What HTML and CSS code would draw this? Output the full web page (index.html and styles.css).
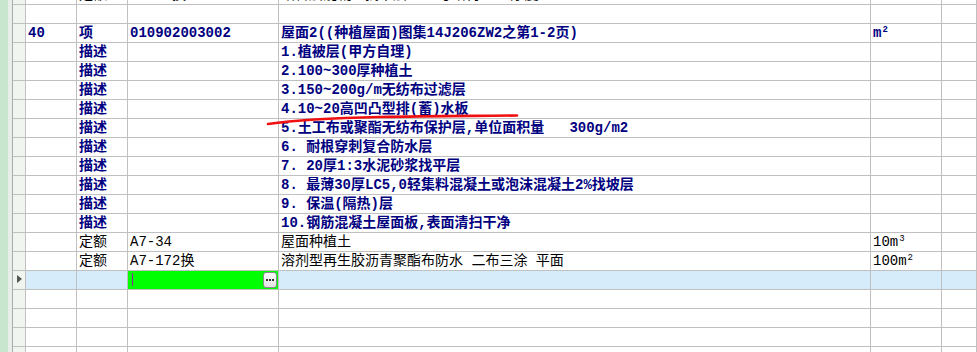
FILE: index.html
```html
<!DOCTYPE html>
<html lang="zh-CN">
<head>
<meta charset="utf-8">
<title>清单</title>
<link rel="stylesheet" href="styles.css">
</head>
<body>
<div class="sheet">
  <div class="side"><div class="strip"></div><div class="gutter"></div></div>
  <div class="grid">
    <div class="row">
      <div class="cell hdr"></div><div class="cell"></div><div class="cell">定额</div><div class="cell">A7-76换</div><div class="cell">结合层混凝土找平层 一 号结构 一 厚度</div><div class="cell"></div><div class="cell"></div>
    </div>
    <div class="row">
      <div class="cell hdr"></div><div class="cell"></div><div class="cell"></div><div class="cell"></div><div class="cell"></div><div class="cell"></div><div class="cell"></div>
    </div>
    <div class="row b">
      <div class="cell hdr"></div><div class="cell">40</div><div class="cell">项</div><div class="cell">010902003002</div><div class="cell">屋面2((种植屋面)图集14J206ZW2之第1-2页)</div><div class="cell">m<span class="sup">2</span></div><div class="cell"></div>
    </div>
    <div class="row b">
      <div class="cell hdr"></div><div class="cell"></div><div class="cell">描述</div><div class="cell"></div><div class="cell">1.植被层(甲方自理)</div><div class="cell"></div><div class="cell"></div>
    </div>
    <div class="row b">
      <div class="cell hdr"></div><div class="cell"></div><div class="cell">描述</div><div class="cell"></div><div class="cell">2.100~300厚种植土</div><div class="cell"></div><div class="cell"></div>
    </div>
    <div class="row b">
      <div class="cell hdr"></div><div class="cell"></div><div class="cell">描述</div><div class="cell"></div><div class="cell">3.150~200g/m无纺布过滤层</div><div class="cell"></div><div class="cell"></div>
    </div>
    <div class="row b">
      <div class="cell hdr"></div><div class="cell"></div><div class="cell">描述</div><div class="cell"></div><div class="cell">4.10~20高凹凸型排(蓄)水板</div><div class="cell"></div><div class="cell"></div>
    </div>
    <div class="row b">
      <div class="cell hdr"></div><div class="cell"></div><div class="cell">描述</div><div class="cell"></div><div class="cell">5.土工布或聚酯无纺布保护层,单位面积量   300g/m2</div><div class="cell"></div><div class="cell"></div>
    </div>
    <div class="row b">
      <div class="cell hdr"></div><div class="cell"></div><div class="cell">描述</div><div class="cell"></div><div class="cell">6. 耐根穿刺复合防水层</div><div class="cell"></div><div class="cell"></div>
    </div>
    <div class="row b">
      <div class="cell hdr"></div><div class="cell"></div><div class="cell">描述</div><div class="cell"></div><div class="cell">7. 20厚1:3水泥砂浆找平层</div><div class="cell"></div><div class="cell"></div>
    </div>
    <div class="row b">
      <div class="cell hdr"></div><div class="cell"></div><div class="cell">描述</div><div class="cell"></div><div class="cell">8. 最薄30厚LC5,0轻集料混凝土或泡沫混凝土2%找坡层</div><div class="cell"></div><div class="cell"></div>
    </div>
    <div class="row b">
      <div class="cell hdr"></div><div class="cell"></div><div class="cell">描述</div><div class="cell"></div><div class="cell">9. 保温(隔热)层</div><div class="cell"></div><div class="cell"></div>
    </div>
    <div class="row b">
      <div class="cell hdr"></div><div class="cell"></div><div class="cell">描述</div><div class="cell"></div><div class="cell">10.钢筋混凝土屋面板,表面清扫干净</div><div class="cell"></div><div class="cell"></div>
    </div>
    <div class="row">
      <div class="cell hdr"></div><div class="cell"></div><div class="cell">定额</div><div class="cell">A7-34</div><div class="cell">屋面种植土</div><div class="cell">10m<span class="sup">3</span></div><div class="cell"></div>
    </div>
    <div class="row">
      <div class="cell hdr"></div><div class="cell"></div><div class="cell">定额</div><div class="cell">A7-172换</div><div class="cell">溶剂型再生胶沥青聚酯布防水 二布三涂 平面</div><div class="cell">100m<span class="sup">2</span></div><div class="cell"></div>
    </div>
    <div class="row sel">
      <div class="cell hdr"><span class="arrow"></span></div><div class="cell"></div><div class="cell"></div><div class="cell edit"><span class="caret"></span><span class="btn"><i></i><i></i><i></i></span></div><div class="cell"></div><div class="cell"></div><div class="cell"></div>
    </div>
    <div class="row">
      <div class="cell hdr"></div><div class="cell"></div><div class="cell"></div><div class="cell"></div><div class="cell"></div><div class="cell"></div><div class="cell"></div>
    </div>
    <div class="row">
      <div class="cell hdr"></div><div class="cell"></div><div class="cell"></div><div class="cell"></div><div class="cell"></div><div class="cell"></div><div class="cell"></div>
    </div>
    <div class="row">
      <div class="cell hdr"></div><div class="cell"></div><div class="cell"></div><div class="cell"></div><div class="cell"></div><div class="cell"></div><div class="cell"></div>
    </div>
    <div class="row">
      <div class="cell hdr"></div><div class="cell"></div><div class="cell"></div><div class="cell"></div><div class="cell"></div><div class="cell"></div><div class="cell"></div>
    </div>
  </div>
  <svg class="annot" width="977" height="352" viewBox="0 0 977 352">
    <path d="M268 124 C 295 120, 330 118, 380 117 S 470 116, 517 115.5" fill="none" stroke="#f01010" stroke-width="2.6" stroke-linecap="round"/>
  </svg>
</div>
</body>
</html>
```
FILE: styles.css
```css
html, body {
  margin: 0;
  padding: 0;
  background: #ffffff;
}

.sheet {
  position: relative;
  display: flex;
  width: 977px;
  height: 352px;
  overflow: hidden;
  font-family: "Liberation Mono", "Noto Sans CJK SC", monospace;
  font-size: 14px;
  color: #000000;
}

.side {
  display: flex;
  flex: none;
}

.strip {
  width: 8px;
  background: #c7e6cd;
}

.gutter {
  width: 4px;
  background: #eaeeea;
}

.grid {
  flex: 1;
  display: flex;
  flex-direction: column;
  margin-top: -14px;
  border-left: 1px solid #a9aca9;
}

.row {
  display: grid;
  grid-template-columns: 13px 51px 51px 151px 592px 71px 1fr;
  height: 19px;
  flex: none;
}

.cell {
  box-sizing: border-box;
  height: 19px;
  border-right: 1px solid #c0c0c0;
  border-bottom: 1px solid #c0c0c0;
  padding-left: 2px;
  line-height: 18px;
  white-space: pre;
  overflow: hidden;
}

.hdr {
  padding: 0;
  background: #f1f5f0;
  position: relative;
}

.b .cell {
  color: #000080;
  font-weight: bold;
}

.sup {
  font-size: 9px;
  position: relative;
  top: -5px;
  margin-left: 1px;
}

.sel .cell {
  background: #d6ecfb;
}

.sel .hdr {
  background: #f1f5f0;
}

.arrow {
  position: absolute;
  left: 4px;
  top: 4px;
  width: 0;
  height: 0;
  border-left: 5px solid #555555;
  border-top: 4.5px solid transparent;
  border-bottom: 4.5px solid transparent;
}

.sel .edit {
  background: #00ff00;
  position: relative;
  padding: 0;
}

.caret {
  position: absolute;
  left: 4px;
  top: 2px;
  width: 1px;
  height: 13px;
  background: #8a2a9a;
}

.btn {
  position: absolute;
  right: 1px;
  top: 1px;
  width: 14px;
  height: 16px;
  box-sizing: border-box;
  border: 1px solid #8a8a8a;
  border-radius: 3px;
  background: linear-gradient(#fbfbfb, #e2e2e2);
  display: flex;
  align-items: center;
  justify-content: center;
  gap: 1px;
}

.btn i {
  display: block;
  width: 2px;
  height: 2px;
  background: #333333;
}

.annot {
  position: absolute;
  left: 0;
  top: 0;
  pointer-events: none;
}
```
